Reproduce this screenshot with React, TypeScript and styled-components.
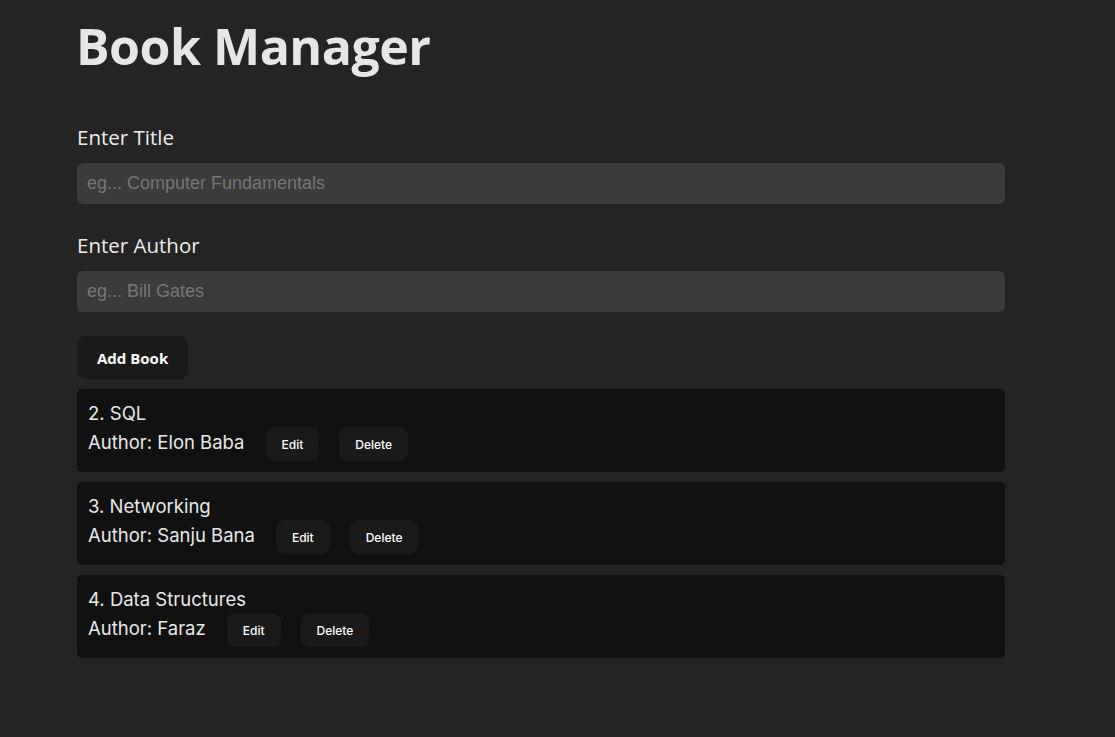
import React from "react";
import styled, { createGlobalStyle } from "styled-components";

const Global = createGlobalStyle`
  html, body { margin: 0; padding: 0; background: #242424; }
  body { font-family: "Open Sans", "Noto Sans", sans-serif; color: rgba(255,255,255,0.87); }
  * { box-sizing: border-box; }
`;

const Page = styled.div`
  min-height: 737px;
  background: #242424;
  padding: 13px 0 0 77px;
`;

const Container = styled.div`
  width: 928px;
  display: flex;
  flex-direction: column;
`;

const Title = styled.h1`
  margin: 0 0 0 -1px;
  font-family: "Open Sans", sans-serif;
  font-weight: 700;
  font-size: 50px;
  line-height: 66px;
  color: #e6e6e6;
  letter-spacing: -0.5px;
`;

const Field = styled.div<{ $top: number }>`
  display: flex;
  flex-direction: column;
  margin-top: ${(p) => p.$top}px;
`;

const Label = styled.label`
  font-family: "Open Sans", sans-serif;
  font-size: 20.5px;
  line-height: 28px;
  color: #ececec;
  margin: 0 0 12px 0;
`;

const Input = styled.input`
  width: 100%;
  height: 41px;
  border: none;
  outline: none;
  border-radius: 6px;
  background: #3b3b3b;
  padding: 0 10px;
  font-family: "Liberation Sans", Arial, sans-serif;
  font-size: 18px;
  color: #ddd;
  &::placeholder { color: #767676; }
`;

const AddButton = styled.button`
  align-self: flex-start;
  margin-top: 24px;
  height: 43px;
  padding: 0 20px;
  border: none;
  border-radius: 8px;
  background: #1a1a1a;
  color: #ffffff;
  font-family: "Open Sans", sans-serif;
  font-weight: 700;
  font-size: 15px;
  cursor: pointer;
`;

const List = styled.ul`
  list-style: none;
  margin: 10px 0 0;
  padding: 0;
  display: flex;
  flex-direction: column;
  gap: 10px;
`;

const Item = styled.li`
  background: #111111;
  border-radius: 5px;
  height: 83px;
  padding: 12px 11px 0;
  font-family: "Inter", "Open Sans", sans-serif;
  color: #e8e8e8;
`;

const BookTitle = styled.div`
  font-size: 18.5px;
  line-height: 25px;
`;

const Row = styled.div`
  display: flex;
  align-items: center;
  gap: 20px;
  margin-top: 1px;
  height: 34px;
`;

const Author = styled.span`
  font-size: 18.5px;
  line-height: 24px;
  margin-right: 1px;
  margin-top: -4px;
`;

const SmallButton = styled.button`
  height: 34px;
  padding: 0 16px;
  border: none;
  border-radius: 8px;
  background: #1a1a1a;
  color: #ffffff;
  font-family: "Inter", sans-serif;
  font-weight: 500;
  font-size: 12px;
  cursor: pointer;
`;

const books = [
  { id: 2, title: "SQL", author: "Elon Baba" },
  { id: 3, title: "Networking", author: "Sanju Bana" },
  { id: 4, title: "Data Structures", author: "Faraz" },
];

export default function App() {
  return (
    <>
      <Global />
      <Page>
        <Container>
          <Title>Book Manager</Title>
          <Field $top={44}>
            <Label>Enter Title</Label>
            <Input placeholder="eg... Computer Fundamentals" />
          </Field>
          <Field $top={27}>
            <Label>Enter Author</Label>
            <Input placeholder="eg... Bill Gates" />
          </Field>
          <AddButton>Add Book</AddButton>
          <List>
            {books.map((b) => (
              <Item key={b.id}>
                <BookTitle>
                  {b.id}. {b.title}
                </BookTitle>
                <Row>
                  <Author>Author: {b.author}</Author>
                  <SmallButton>Edit</SmallButton>
                  <SmallButton>Delete</SmallButton>
                </Row>
              </Item>
            ))}
          </List>
        </Container>
      </Page>
    </>
  );
}
